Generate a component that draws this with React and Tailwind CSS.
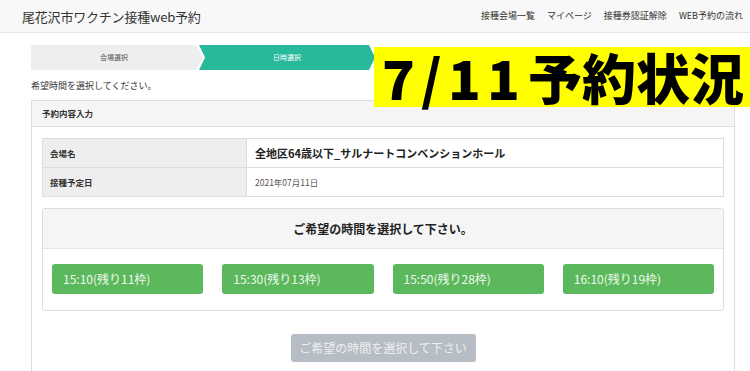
import React from "react";

const font = { fontFamily: '"Noto Sans CJK JP", "Noto Sans", sans-serif' };

export default function App() {
  const times = ["15:10(残り11枠)", "15:30(残り13枠)", "15:50(残り28枠)", "16:10(残り19枠)"];
  return (
    <div className="relative w-[750px] h-[371px] overflow-hidden bg-white text-[#333]" style={font}>
      <header className="h-[33px] bg-[#f8f8f8] border-b border-[#e7e7e7] flex items-center justify-between pl-[22px] pr-[7px]">
        <div className="text-[13px] leading-none tracking-[-0.2px] text-[#333] whitespace-nowrap">尾花沢市ワクチン接種web予約</div>
        <nav className="flex gap-[12px] text-[9px] leading-[12px] text-[#333] whitespace-nowrap">
          <span>接種会場一覧</span>
          <span>マイページ</span>
          <span>接種券認証解除</span>
          <span>WEB予約の流れ</span>
        </nav>
      </header>

      <div className="ml-[31px] w-[704px]">
        <div className="mt-[12px] flex h-[25px] text-[7px] leading-none">
          <div className="w-[172px] bg-[#eeeeee] text-[#555] flex items-center justify-center pr-[6px] [clip-path:polygon(0_0,calc(100%_-_7px)_0,100%_50%,calc(100%_-_7px)_100%,0_100%)]">
            会場選択
          </div>
          <div className="-ml-[4px] w-[176px] bg-[#27b99a] text-white flex items-center justify-center [clip-path:polygon(0_0,calc(100%_-_6px)_0,100%_50%,calc(100%_-_6px)_100%,0_100%,6px_50%)]">
            日時選択
          </div>
        </div>

        <p className="mt-[10px] text-[9px] leading-[12px] text-[#333]">希望時間を選択してください。</p>

        <section className="mt-[8px] border border-[#dddddd] h-[300px]">
          <div className="h-[26px] bg-[#f5f5f5] border-b border-[#dddddd] flex items-center px-[10px] text-[8.5px] font-bold text-[#333]">
            予約内容入力
          </div>
          <div className="px-[10px] pt-[11px]">
            <div className="border border-[#dddddd]">
              <div className="flex h-[29px] border-b border-[#dddddd]">
                <div className="w-[204px] bg-[#eeeeee] border-r border-[#dddddd] flex items-center px-[7px] text-[8.5px] font-bold text-[#333]">会場名</div>
                <div className="flex-1 flex items-center px-[8px] text-[11px] font-bold text-[#222]">全地区64歳以下_サルナートコンベンションホール</div>
              </div>
              <div className="flex h-[28px]">
                <div className="w-[204px] bg-[#eeeeee] border-r border-[#dddddd] flex items-center px-[7px] text-[8.5px] font-bold text-[#333]">接種予定日</div>
                <div className="flex-1 flex items-center px-[8px] text-[8.5px] text-[#555]">2021年07月11日</div>
              </div>
            </div>

            <div className="mt-[11px] border border-[#dddddd] rounded-[3px] overflow-hidden">
              <div className="h-[40px] bg-[#f5f5f5] border-b border-[#e5e5e5] flex items-center justify-center text-[12px] font-bold text-[#222]">
                ご希望の時間を選択して下さい。
              </div>
              <div className="grid grid-cols-4 gap-[19px] px-[9px] pt-[15px] pb-[16px]">
                {times.map((t) => (
                  <div key={t} className="h-[30px] bg-[#5cb85c] rounded-[3px] flex items-center px-[11px] text-[12px] text-[#eef8ee]">
                    {t}
                  </div>
                ))}
              </div>
            </div>

            <div className="mt-[23px] flex justify-center">
              <div className="w-[185px] h-[28px] bg-[#b7bdc4] rounded-[3px] flex items-center justify-center text-[12px] text-[#eef0f2]">
                ご希望の時間を選択して下さい
              </div>
            </div>
          </div>
        </section>
      </div>

      <div className="absolute left-[374px] top-[47px] w-[376px] h-[60px] bg-[#ffff00] flex items-center pl-[8px] text-[54px] font-black leading-none text-black whitespace-nowrap">
        <div className="flex w-[146px] justify-between pr-[8px]">
          <span>7</span>
          <span>/</span>
          <span>1</span>
          <span>1</span>
        </div>
        <span>予約状況</span>
      </div>
    </div>
  );
}
